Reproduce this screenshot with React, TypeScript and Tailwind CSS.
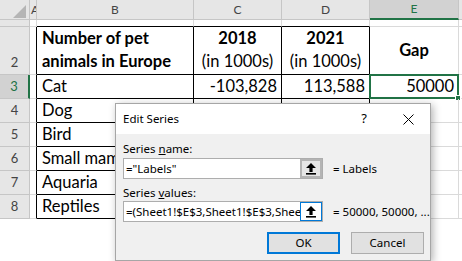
const rows = [
  { n: 3, b: "Cat", c: "-103,828", d: "113,588", e: "50000" },
  { n: 4, b: "Dog", c: "", d: "", e: "" },
  { n: 5, b: "Bird", c: "", d: "", e: "" },
  { n: 6, b: "Small mammals", c: "", d: "", e: "" },
  { n: 7, b: "Aquaria", c: "", d: "", e: "" },
  { n: 8, b: "Reptiles", c: "", d: "", e: "" },
]

function UpArrow() {
  return (
    <svg width="10" height="12" viewBox="0 0 10 12">
      <path d="M5 0 L10 5 L6.6 5 L6.6 9 L3.4 9 L3.4 5 L0 5 Z" fill="#000" />
      <rect x="0" y="10" width="10" height="1.6" fill="#000" />
    </svg>
  )
}

function RefInput({ text, focused }: { text: string; focused?: boolean }) {
  return (
    <div className="flex h-[21px] w-[200px] shrink-0 border border-[#adadad] bg-white">
      <div className="flex-1 overflow-hidden whitespace-nowrap pl-[2px] text-[11.5px] leading-[19px]">
        {text}
      </div>
      {focused ? (
        <div className="flex w-[22px] items-center justify-center border border-[#0078d7] bg-white">
          <UpArrow />
        </div>
      ) : (
        <div className="flex w-[22px] items-center justify-center border-2 border-[#b4b4b4] bg-[#e6e6e6]">
          <UpArrow />
        </div>
      )}
    </div>
  )
}

function EditSeries() {
  return (
    <div className="absolute left-[115px] top-[103px] flex h-[158px] w-[316px] flex-col border border-[#a6a6a6] font-['Noto_Sans',sans-serif] text-black shadow-[2px_2px_8px_rgba(0,0,0,0.3)]">
      <div className="flex h-[30px] shrink-0 items-center bg-white pl-[7px]">
        <span className="text-[11.5px]">Edit Series</span>
        <span className="ml-auto mr-[36px] text-[13px]">?</span>
        <svg width="11" height="11" viewBox="0 0 11 11" className="mr-[16px]">
          <path d="M0.5 0.5 L10.5 10.5 M10.5 0.5 L0.5 10.5" stroke="#000" strokeWidth="1" />
        </svg>
      </div>
      <div className="flex flex-1 flex-col bg-[#f0f0f0] pl-[7px] pr-[6px] text-[11.5px]">
        <div className="mt-[7px] h-[16px] leading-[16px]">
          Series <span className="underline">n</span>ame:
        </div>
        <div className="mt-[1px] flex items-center whitespace-nowrap">
          <RefInput text={'="Labels"'} />
          <span className="ml-[10px]">= Labels</span>
        </div>
        <div className="mt-[6px] h-[16px] leading-[16px]">
          Series <span className="underline">v</span>alues:
        </div>
        <div className="flex items-center whitespace-nowrap">
          <RefInput text="=(Sheet1!$E$3,Sheet1!$E$3,Sheet1!$E$3)" focused />
          <span className="ml-[10px]">= 50000, 50000, ...</span>
        </div>
        <div className="mt-[10px] flex justify-end gap-[11px]">
          <div className="flex h-[22px] w-[73px] items-center justify-center border-2 border-[#0078d7] bg-[#e1e1e1]">
            OK
          </div>
          <div className="flex h-[22px] w-[73px] items-center justify-center border border-[#adadad] bg-[#e1e1e1]">
            Cancel
          </div>
        </div>
      </div>
    </div>
  )
}

export default function App() {
  return (
    <div className="relative h-[261px] w-[462px] overflow-hidden bg-white font-['Lato',sans-serif] text-black">
      {/* column headers */}
      <div className="flex h-[20px] text-[12px] text-[#444]">
        <div className="flex w-[30px] shrink-0 items-end justify-end border-r border-b border-[#c6c6c6] bg-[#e6e6e6] pr-[3px] pb-[1px]">
          <svg width="13" height="13" viewBox="0 0 13 13">
            <path d="M13 0 L13 13 L0 13 Z" fill="#b5b5b5" />
          </svg>
        </div>
        <div className="w-[7px] shrink-0 overflow-hidden border-r border-b border-[#c6c6c6] bg-[#e6e6e6] pl-[1px] leading-[19px]">
          A
        </div>
        <div className="w-[157px] shrink-0 border-r border-b border-[#c6c6c6] bg-[#e6e6e6] text-center leading-[19px]">
          B
        </div>
        <div className="w-[88px] shrink-0 border-r border-b border-[#c6c6c6] bg-[#e6e6e6] text-center leading-[19px]">
          C
        </div>
        <div className="w-[88px] shrink-0 border-r border-b border-[#c6c6c6] bg-[#e6e6e6] text-center leading-[19px]">
          D
        </div>
        <div className="w-[89px] shrink-0 border-r border-b-2 border-r-[#c6c6c6] border-b-[#217346] bg-[#d2d2d2] text-center leading-[18px] text-[#217346]">
          E
        </div>
        <div className="flex-1 border-b border-[#c6c6c6] bg-[#e6e6e6]" />
      </div>

      {/* row 1 */}
      <div className="flex h-[7px]">
        <div className="w-[30px] shrink-0 border-r border-b border-[#c6c6c6] bg-[#e6e6e6]" />
        <div className="w-[7px] shrink-0 border-r border-b border-[#dadada]" />
        <div className="w-[157px] shrink-0 border-r border-r-[#dadada] border-b border-b-black" />
        <div className="w-[88px] shrink-0 border-r border-r-[#dadada] border-b border-b-black" />
        <div className="w-[88px] shrink-0 border-r border-r-[#dadada] border-b border-b-black" />
        <div className="w-[89px] shrink-0 border-r border-b border-[#dadada]" />
        <div className="flex-1 border-b border-[#dadada]" />
      </div>

      {/* row 2 */}
      <div className="flex h-[48px] text-[16.5px]">
        <div className="flex w-[30px] shrink-0 items-end justify-center border-r border-b border-[#c6c6c6] bg-[#e6e6e6] pb-[2px] text-[13px] text-[#444]">
          2
        </div>
        <div className="w-[7px] shrink-0 border-r border-r-black border-b border-b-[#dadada]" />
        <div className="w-[157px] shrink-0 border-r border-b border-black pl-[5px] font-bold leading-[23px]">
          Number of pet
          <br />
          animals in Europe
        </div>
        <div className="flex w-[88px] shrink-0 flex-col items-center border-r border-b border-black leading-[23px]">
          <span className="font-bold">2018</span>
          <span>(in 1000s)</span>
        </div>
        <div className="flex w-[88px] shrink-0 flex-col items-center border-r border-b border-black leading-[23px]">
          <span className="font-bold">2021</span>
          <span>(in 1000s)</span>
        </div>
        <div className="flex w-[89px] shrink-0 items-center justify-center border-r border-b border-[#dadada] font-bold">
          Gap
        </div>
        <div className="flex-1 border-b border-[#dadada]" />
      </div>

      {/* data rows */}
      {rows.map((r) => (
        <div key={r.n} className="flex h-[24px] text-[16.5px] leading-[23px]">
          {r.n === 3 ? (
            <div className="w-[30px] shrink-0 border-r-2 border-b border-r-[#217346] border-b-[#c6c6c6] bg-[#d2d2d2] text-center text-[13px] text-[#217346]">
              {r.n}
            </div>
          ) : (
            <div className="w-[30px] shrink-0 border-r border-b border-[#c6c6c6] bg-[#e6e6e6] text-center text-[13px] text-[#444]">
              {r.n}
            </div>
          )}
          <div className="w-[7px] shrink-0 border-r border-r-black border-b border-b-[#dadada]" />
          <div className="w-[157px] shrink-0 whitespace-nowrap border-r border-b border-black pl-[5px]">
            {r.b}
          </div>
          <div className="w-[88px] shrink-0 border-r border-b border-black pr-[4px] text-right">
            {r.c}
          </div>
          <div className="w-[88px] shrink-0 border-r border-b border-black pr-[4px] text-right">
            {r.d}
          </div>
          <div className="relative w-[89px] shrink-0 border-r border-b border-[#dadada] pr-[4px] text-right">
            {r.e}
            {r.n === 3 && (
              <>
                <div className="absolute -left-[1px] -top-[1px] -right-[1px] -bottom-[1px] border-2 border-[#217346]" />
                <div className="absolute -right-[3px] -bottom-[3px] h-[6px] w-[6px] border border-white bg-[#217346]" />
              </>
            )}
          </div>
          <div className="flex-1 border-b border-[#dadada]" />
        </div>
      ))}

      <EditSeries />
    </div>
  )
}
